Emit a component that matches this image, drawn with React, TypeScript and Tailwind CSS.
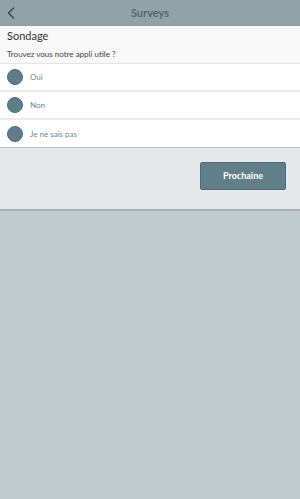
import { ChevronLeft } from "lucide-react";

const options = ["Oui", "Non", "Je ne sais pas"];

export default function App() {
  return (
    <div
      className="flex min-h-[499px] w-full flex-col bg-[#c0cbd0]"
      style={{ fontFamily: 'Lato, "Open Sans", "Liberation Sans", sans-serif' }}
    >
      <header className="relative flex h-[26px] items-center justify-center bg-[#8fa3a9]">
        <ChevronLeft className="absolute left-[1px] top-[3px] h-[20px] w-[20px] text-[#3d4a50]" strokeWidth={1.8} />
        <span className="text-[11px] font-bold text-[#56666c]">Surveys</span>
      </header>

      <section className="bg-[#f8f8f8]">
        <div className="flex h-[19px] items-center px-[7px] pt-[2px] text-[11px] text-[#333]">Sondage</div>
        <div className="flex h-[18px] items-center px-[7px] text-[8px] text-[#444]">
          Trouvez vous notre appli utile ?
        </div>
      </section>

      <div className="border-t border-[#e4e4e4] bg-white">
        {options.map((o, i) => (
          <div
            key={o}
            className={`flex h-[28px] items-center gap-[7px] px-[7px] ${
              i < options.length - 1 ? "border-b-2 border-[#ececec]" : "border-b border-[#bdbdbd]"
            }`}
          >
            <span className="h-[16px] w-[16px] rounded-full border border-[#4c6a75] bg-[#5f7d88]" />
            <span className="text-[8px] text-[#6a8792]">{o}</span>
          </div>
        ))}
      </div>

      <div className="flex h-[63px] justify-end border-b-2 border-[#a9aeb0] bg-[#e6e9ea] px-[14px] pt-[14px]">
        <button className="h-[28px] w-[86px] rounded-[2px] border border-[#4e6b75] bg-[#607f89] text-[9px] font-bold text-white">
          Prochaine
        </button>
      </div>
    </div>
  );
}
